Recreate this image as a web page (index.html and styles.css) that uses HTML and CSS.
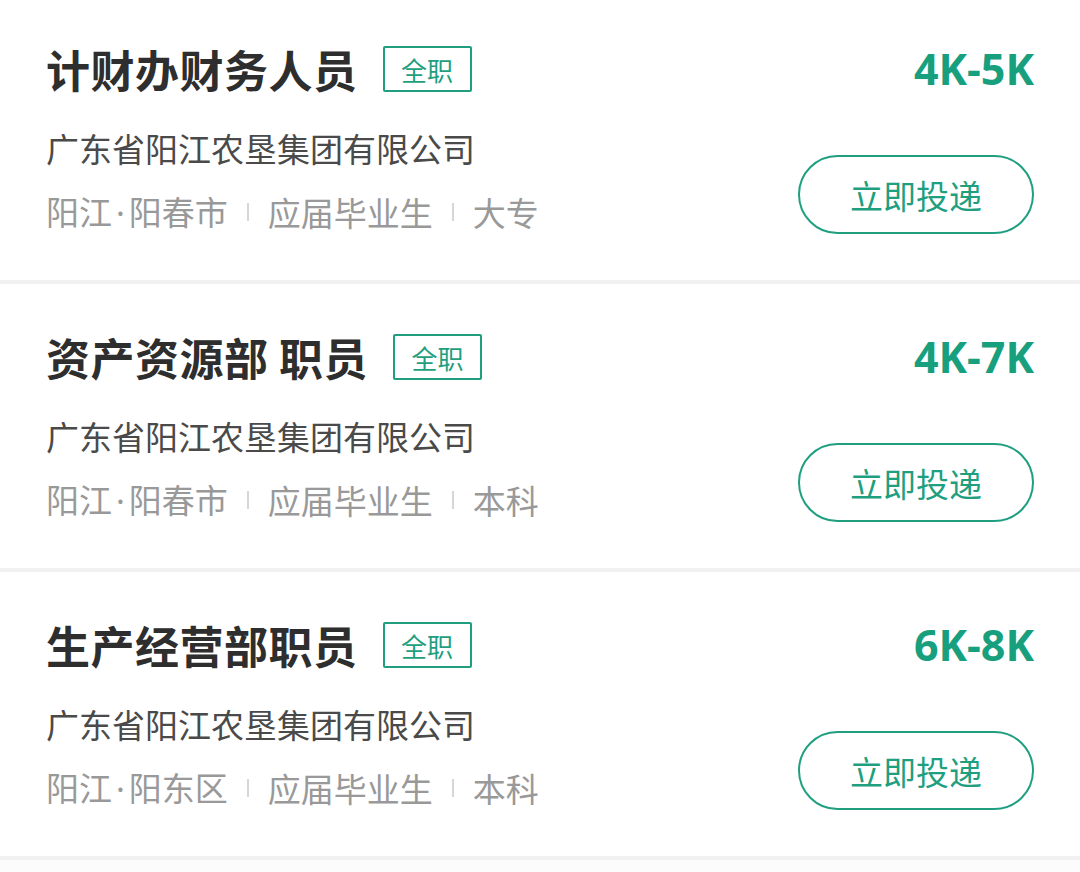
FILE: index.html
```html
<!DOCTYPE html>
<html lang="zh-CN">

<head>
    <meta charset="UTF-8">
    <meta name="viewport" content="width=device-width, initial-scale=1.0">
    <title>职位列表</title>

    <link rel="stylesheet" href="styles.css">
</head>

<body>
    <div class="job-list">
        <div class="job">
            <div class="job-main">
                <div class="job-head">
                    <h2 class="job-title">计财办财务人员</h2>
                    <span class="job-tag">全职</span>
                </div>
                <p class="job-company">广东省阳江农垦集团有限公司</p>
                <p class="job-meta">
                    <span>阳江<b class="dot">·</b>阳春市</span><i class="sep"></i><span>应届毕业生</span><i class="sep"></i><span>大专</span>
                </p>
            </div>
            <div class="job-side">
                <span class="job-salary">4K-5K</span>
                <a class="job-apply">立即投递</a>
            </div>
        </div>
        <div class="job">
            <div class="job-main">
                <div class="job-head">
                    <h2 class="job-title">资产资源部 职员</h2>
                    <span class="job-tag">全职</span>
                </div>
                <p class="job-company">广东省阳江农垦集团有限公司</p>
                <p class="job-meta">
                    <span>阳江<b class="dot">·</b>阳春市</span><i class="sep"></i><span>应届毕业生</span><i class="sep"></i><span>本科</span>
                </p>
            </div>
            <div class="job-side">
                <span class="job-salary">4K-7K</span>
                <a class="job-apply">立即投递</a>
            </div>
        </div>
        <div class="job">
            <div class="job-main">
                <div class="job-head">
                    <h2 class="job-title">生产经营部职员</h2>
                    <span class="job-tag">全职</span>
                </div>
                <p class="job-company">广东省阳江农垦集团有限公司</p>
                <p class="job-meta">
                    <span>阳江<b class="dot">·</b>阳东区</span><i class="sep"></i><span>应届毕业生</span><i class="sep"></i><span>本科</span>
                </p>
            </div>
            <div class="job-side">
                <span class="job-salary">6K-8K</span>
                <a class="job-apply">立即投递</a>
            </div>
        </div>
        <div class="job-next"></div>
    </div>
</body>

</html>
```

FILE: styles.css
```css
* {
    padding: 0;
    margin: 0;
    box-sizing: border-box;
}

body {
    background-color: #fff;
    font-family: "Noto Sans CJK SC", "Noto Sans", sans-serif;
    overflow: hidden;
}

.job-list {
    margin-top: -4px;
}

.job {
    display: flex;
    justify-content: space-between;
    height: 288px;
    padding: 50px 46px 46px;
    background-color: #fff;
    border-bottom: 4px solid #f1f1f1;
}

.job-next {
    height: 12px;
    background-color: #fcfcfc;
}

.job-head {
    display: flex;
    align-items: center;
    height: 46px;
}

.job-title {
    font-size: 44px;
    line-height: 46px;
    font-weight: 700;
    letter-spacing: 0.5px;
    color: #2e2e2e;
}

.job-tag {
    display: flex;
    align-items: center;
    justify-content: center;
    width: 89px;
    height: 46px;
    margin-left: 25px;
    border: 2px solid #1f9f80;
    border-radius: 2px;
    font-size: 26px;
    color: #1f9f80;
}

.job-company {
    margin-top: 34px;
    font-size: 33px;
    line-height: 44px;
    color: #4a4a4a;
}

.job-meta {
    display: flex;
    align-items: center;
    margin-top: 19px;
    font-size: 33px;
    line-height: 44px;
    color: #999;
}

.dot {
    font-family: "Noto Sans", sans-serif;
    font-weight: 400;
    padding: 0 4px;
}

.sep {
    width: 2px;
    height: 18px;
    margin: 0 19px;
    background-color: #d6d6d6;
}

.job-side {
    display: flex;
    flex-direction: column;
    align-items: flex-end;
    justify-content: space-between;
}

.job-salary {
    font-family: "Noto Sans", sans-serif;
    font-size: 43px;
    line-height: 46px;
    font-weight: 700;
    color: #18a07e;
}

.job-apply {
    display: flex;
    align-items: center;
    justify-content: center;
    width: 236px;
    height: 79px;
    border: 2px solid #1f9f80;
    border-radius: 40px;
    font-size: 33px;
    color: #1f9f80;
    cursor: pointer;
}
```
